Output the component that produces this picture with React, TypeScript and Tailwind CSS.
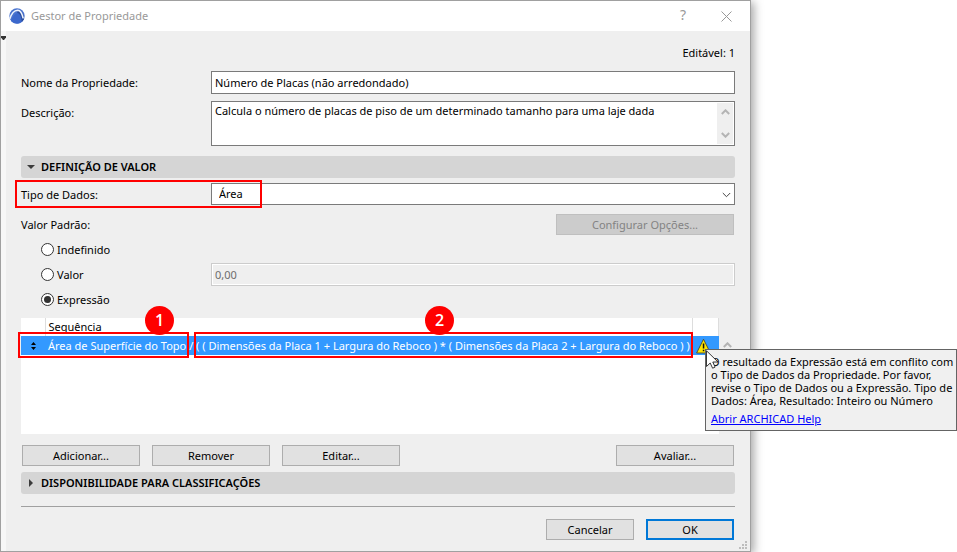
import { useState } from 'react';
import type { ReactNode } from 'react';

type DefaultKind = 'undefined' | 'value' | 'expression';

const KINDS: { id: DefaultKind; label: string }[] = [
  { id: 'undefined', label: 'Indefinido' },
  { id: 'value', label: 'Valor' },
  { id: 'expression', label: 'Expressão' },
];

function AppLogo() {
  return (
    <svg className="size-4" viewBox="0 0 16 16" aria-hidden="true">
      <circle cx="8" cy="8" r="7.7" fill="#4a74cf" />
      <path d="M9 2c3.500.5 6 4 5.800 9.500a7.700 7.700 0 0 1-2.300 2.600L8 4z" fill="#2b4c9c" />
      <path d="M.9 10.800C2.300 6 5.400 2.300 8.600 2.200c2.600 0 4.600 3.200 5.600 8.200" fill="none" stroke="#eef3fd" strokeWidth="1.600" />
      <path d="M2 12.800C3.800 8.400 6 5.200 8.500 5c2.300.2 3.700 3.600 4.300 8.800C9.500 16.600 4.800 16 2 12.800z" fill="#3c68cc" />
    </svg>
  );
}

function Chevron({ dir, className }: { dir: 'up' | 'down'; className: string }) {
  return (
    <svg className={className} viewBox="0 0 9 6" fill="none" stroke="currentColor" aria-hidden="true">
      <path d={dir === 'up' ? 'M.8 5 4.500 1.300 8.200 5' : 'M.8 1 4.500 4.700 8.200 1'} />
    </svg>
  );
}

function WarningIcon() {
  return (
    <svg className="h-4 w-[15px]" viewBox="0 0 15 16" aria-hidden="true">
      <path d="M7.500 1.200 14.400 15H.6z" fill="#ffe600" stroke="#4a4a30" strokeWidth=".9" strokeLinejoin="round" />
      <path d="M6.800 5.500h1.500v5H6.800zM6.800 11.700h1.500v1.600H6.800z" fill="#111" />
    </svg>
  );
}

function Cursor() {
  return (
    <svg className="absolute left-0 top-0 h-[19px] w-[13px]" viewBox="0 0 13 19" aria-hidden="true">
      <path d="M.5.8v15.700l3.700-3.500 2.400 5.200 2.500-1.100-2.300-5.100h5.200z" fill="#fff" stroke="#222" strokeWidth=".9" />
    </svg>
  );
}

function SectionHeader({ open, children }: { open: boolean; children: ReactNode }) {
  return (
    <h2 className="rounded-[3px] bg-[#d5d5d5]">
      <button type="button" aria-expanded={open} className="flex h-[22px] w-full items-center pb-px font-semibold">
        <span className="flex w-5 justify-center">
          <svg className="size-2" viewBox="0 0 8 8" fill="#3c3c3c" aria-hidden="true">
            <path d={open ? 'M0 2h8L4 6z' : 'M2 0l4 4-4 4z'} />
          </svg>
        </span>
        {children}
      </button>
    </h2>
  );
}

function PushButton({ className, children }: { className: string; children: ReactNode }) {
  return (
    <button type="button" className={`h-[21px] bg-[#e1e1e1] ${className}`}>
      {children}
    </button>
  );
}

/* Numbered red marker sitting on top of a highlighted area */
function Marker({ className, children }: { className: string; children: ReactNode }) {
  return (
    <span
      className={`absolute flex size-[29px] items-center justify-center rounded-full bg-[#f00] pb-px font-['Open_Sans',sans-serif] text-base font-semibold text-white ${className}`}
    >
      {children}
    </span>
  );
}

function Outline({ className }: { className: string }) {
  return <span className={`pointer-events-none absolute border-2 border-[#f00] ${className}`} />;
}

export default function App() {
  const [kind, setKind] = useState<DefaultKind>('expression');

  return (
    <div className="overflow-hidden bg-white font-['Noto_Sans','Segoe_UI',sans-serif] text-[11px] leading-[13px] text-black">
      <main className="relative w-full max-w-[751px] border border-[#a0a0a0] bg-[#efefef] shadow-[3px_2px_9px_rgba(0,0,0,0.35)]">
        {/* Title bar */}
        <header className="flex h-[30px] items-center bg-white pl-2 pr-[18px] text-[#999]">
          <AppLogo />
          <h1 className="ml-1.5 flex-1 pb-0.5">Gestor de Propriedade</h1>
          <button type="button" className="mr-[35px] pb-0.5 text-sm">?</button>
          <button type="button" aria-label="Fechar">
            <svg className="size-[11px]" viewBox="0 0 11 11" stroke="currentColor" aria-hidden="true">
              <path d="M.5.5l10 10M10.500.5l-10 10" />
            </svg>
          </button>
        </header>

        <div className="border-l-[5px] border-[#f7f7f7] pb-[11px] pl-[15px] pr-[15px] pt-[15px]">
          <svg className="absolute left-0 top-[35px] h-1 w-[5px]" viewBox="0 0 5 4" aria-hidden="true">
            <path d="M0 0h5v1.500L3 4H2L0 1.500z" fill="#333" />
          </svg>

          <p className="text-right">Editável: 1</p>

          <div className="mt-3 grid grid-cols-[190px_1fr] gap-y-[7px]">
            <label htmlFor="name" className="pt-[5px]">Nome da Propriedade:</label>
            <input
              id="name"
              className="h-[23px] border border-[#7a7a7a] bg-white px-[3px]"
              defaultValue="Número de Placas (não arredondado)"
            />
            <label htmlFor="description" className="pt-[5px]">Descrição:</label>
            <div className="flex h-[45px] border border-[#7a7a7a] bg-white p-px">
              <textarea
                id="description"
                className="flex-1 resize-none px-0.5 pt-px"
                defaultValue="Calcula o número de placas de piso de um determinado tamanho para uma laje dada"
              />
              <div className="flex w-4 flex-col items-center justify-between bg-[#efefef] py-1.5 text-[#b4b4b4]">
                <Chevron dir="up" className="h-1.5 w-[9px] stroke-2" />
                <Chevron dir="down" className="h-1.5 w-[9px] stroke-2" />
              </div>
            </div>
          </div>

          <div className="mt-2.5">
            <SectionHeader open>DEFINIÇÃO DE VALOR</SectionHeader>
          </div>

          <div className="relative mt-[5px] grid grid-cols-[190px_1fr]">
            <label htmlFor="type" className="pt-[5px]">Tipo de Dados:</label>
            <div className="relative">
              <select id="type" className="h-[22px] w-full appearance-none border border-[#7a7a7a] bg-white pb-0.5 pl-[7px]">
                <option>Área</option>
              </select>
              <Chevron dir="down" className="pointer-events-none absolute right-1 top-[9px] h-1.5 w-[9px] text-[#444]" />
            </div>
            <Outline className="-left-1.5 -top-[3px] h-7 w-[247px]" />
          </div>

          <div className="mt-[9px] flex items-center justify-between pr-px">
            <span id="default-label">Valor Padrão:</span>
            <button type="button" disabled className="h-[21px] w-[178px] border border-[#bfbfbf] bg-[#ccc] text-[#838383]">
              Configurar Opções...
            </button>
          </div>

          <div role="radiogroup" aria-labelledby="default-label" className="mt-[2px]">
            {KINDS.map(k => (
              <div key={k.id} className="grid h-[25px] grid-cols-[190px_1fr] items-center">
                <label className="flex items-center gap-[3px] pl-5">
                  <input
                    type="radio"
                    name="kind"
                    checked={kind === k.id}
                    onChange={() => setKind(k.id)}
                    className="grid size-[13px] appearance-none place-items-center rounded-full border border-[#333] bg-white before:size-[7px] before:rounded-full checked:before:bg-[#333]"
                  />
                  {k.label}
                </label>
                {k.id === 'value' && (
                  <input
                    aria-label="Valor"
                    disabled
                    className="h-[23px] border border-[#ccc] bg-[#efefef] px-[3px] text-[#6d6d6d] shadow-[inset_0_0_0_1px_#fff]"
                    defaultValue="0,00"
                  />
                )}
              </div>
            ))}
          </div>

          {/* Expression list */}
          <div className="relative mt-[6px] flex h-[116px]">
            <div className="flex-1 bg-white">
              <table className="w-full table-fixed border-collapse text-left">
                <colgroup>
                  <col className="w-6" />
                  <col />
                  <col className="w-[26px]" />
                </colgroup>
                <thead>
                  <tr className="h-[18px]">
                    <th className="border-r border-[#ddd] p-0" />
                    <th className="border-r border-[#ddd] p-0 pb-px pl-[3px] font-normal">Sequência</th>
                    <th className="border-r border-[#ddd] p-0" />
                  </tr>
                </thead>
                <tbody>
                  <tr className="h-[19px] bg-[#3399ff] text-white">
                    <td className="p-0">
                      <svg className="mx-auto h-2 w-[5px]" viewBox="0 0 5 8" aria-hidden="true">
                        <path d="M0 3h5L2.500 0zM0 5h5L2.500 8z" fill="#000" />
                      </svg>
                    </td>
                    <td className="whitespace-pre p-0 pl-[3px]">
                      Área de Superfície do Topo / ( ( Dimensões da Placa 1 + Largura do Reboco ) * ( Dimensões da Placa 2 + Largura do Reboco ) )
                    </td>
                    <td className="p-0 pl-[3px]"><WarningIcon /></td>
                  </tr>
                </tbody>
              </table>
            </div>
            <div className="w-4 pt-6 text-[#b4b4b4]">
              <Chevron dir="up" className="mx-auto h-1.5 w-[9px] stroke-2" />
            </div>
            <Outline className="-left-[3px] top-3.5 h-[26px] w-[171px]" />
            <Outline className="left-[173px] top-3.5 h-[26px] w-[499px]" />
            <Marker className="-top-3 left-[124px]">1</Marker>
            <Marker className="-top-3 left-[404px]">2</Marker>

            {/* Conflict tooltip */}
            <div role="tooltip" className="absolute left-[684px] top-[31px] h-[82px] w-[252px] border border-[#646464] bg-[#f0f0f0] p-[5px]">
              <p className="whitespace-nowrap">
                O resultado da Expressão está em conflito com
                <br />
                o Tipo de Dados da Propriedade. Por favor,
                <br />
                revise o Tipo de Dados ou a Expressão. Tipo de
                <br />
                Dados: Área, Resultado: Inteiro ou Número
              </p>
              <a href="#help" className="mt-[5px] block text-[#00f] underline">Abrir ARCHICAD Help</a>
              <Cursor />
            </div>
          </div>

          <div className="mt-[11px] flex gap-3 px-px">
            <PushButton className="w-[118px] border border-[#adadad]">Adicionar...</PushButton>
            <PushButton className="w-[118px] border border-[#adadad]">Remover</PushButton>
            <PushButton className="w-[118px] border border-[#adadad]">Editar...</PushButton>
            <PushButton className="ml-auto w-[118px] border border-[#adadad]">Avaliar...</PushButton>
          </div>

          <div className="mt-1.5">
            <SectionHeader open={false}>DISPONIBILIDADE PARA CLASSIFICAÇÕES</SectionHeader>
          </div>

          <footer className="mt-3 flex justify-end gap-3 border-t border-[#a0a0a0] pr-px pt-3">
            <PushButton className="w-[88px] border border-[#adadad]">Cancelar</PushButton>
            <PushButton className="w-[88px] border-2 border-[#0078d7]">OK</PushButton>
          </footer>
        </div>

        {/* Resize grip */}
        <svg className="absolute bottom-0.5 right-[3px] size-2" viewBox="0 0 8 8" fill="#bdbdbd" aria-hidden="true">
          <path d="M6 0h2v2H6zM6 3h2v2H6zM3 3h2v2H3zM6 6h2v2H6zM3 6h2v2H3zM0 6h2v2H0z" />
        </svg>
      </main>
    </div>
  );
}
